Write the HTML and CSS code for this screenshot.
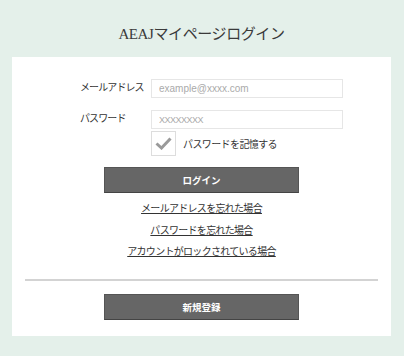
FILE: index.html
```html
<!DOCTYPE html>
<html lang="ja">
<head>
<meta charset="UTF-8" />
<title>AEAJマイページログイン</title>
<link rel="stylesheet" href="styles.css">
</head>
<body>
<main class="page">
  <h1 class="title">AEAJマイページログイン</h1>
  <section class="card">
    <form class="login">
      <div class="row">
        <label class="lbl" for="mail">メールアドレス</label>
        <input class="field" type="text" id="mail" placeholder="example@xxxx.com" />
      </div>
      <div class="row">
        <label class="lbl" for="pw">パスワード</label>
        <input class="field pw" type="password" id="pw" placeholder="XXXXXXXX" />
      </div>
      <div class="row remember">
        <span class="check"><svg width="17" height="13" viewBox="0 0 17 13"><path d="M1.5 6.5 L6.5 11 L15.5 1.5" fill="none" stroke="#9a9a9a" stroke-width="3"/></svg></span>
        <span class="remember-txt">パスワードを記憶する</span>
      </div>
      <button type="button" class="btn">ログイン</button>
    </form>
    <nav class="links">
      <a href="#">メールアドレスを忘れた場合</a>
      <a href="#">パスワードを忘れた場合</a>
      <a href="#">アカウントがロックされている場合</a>
    </nav>
    <hr class="sep" />
    <div class="reg"><button type="button" class="btn">新規登録</button></div>
  </section>
</main>
</body>
</html>
```

FILE: styles.css
```css
*,*:before,*:after{box-sizing:border-box;}
body{margin:0;background:#e4f0ea;font-family:"Noto Sans CJK JP","Noto Sans",sans-serif;color:#333;}
.page{width:404px;height:356px;padding:0 13px 0 12px;}
.title{margin:0;height:57px;padding-top:24px;text-align:center;font-family:"Liberation Serif","Noto Sans CJK JP",serif;font-weight:400;font-size:15px;line-height:20px;letter-spacing:-.4px;color:#3a3a3a;}
.card{background:#fff;padding:22px 0 15px;height:279px;}
.login{display:flex;flex-direction:column;}
.row{display:flex;align-items:center;padding-left:68px;margin-bottom:12px;}
.lbl{width:71px;font-size:10px;line-height:14px;margin-top:-4px;letter-spacing:-.9px;}
.field{width:192px;height:19px;border:1px solid #e6e6e6;padding:0 7px;font-family:"Liberation Sans",sans-serif;font-size:10px;color:#333;outline:none;}
.field::placeholder{color:#aaa;}
.field.pw::placeholder{font-size:9px;letter-spacing:-.5px;}
.remember{padding-left:139px;margin-top:-10px;margin-bottom:11px;gap:7px;}
.check{width:25px;height:25px;border:1px solid #ddd;display:flex;align-items:center;justify-content:center;}
.remember-txt{font-size:10px;line-height:14px;letter-spacing:-.6px;}
.btn{display:block;margin:0 auto;width:195px;height:26px;background:#666;border:1px solid #555;border-bottom-color:#444;color:#fff;font-family:"Noto Sans CJK JP",sans-serif;font-weight:700;font-size:9.5px;cursor:pointer;}
.links{display:flex;flex-direction:column;align-items:center;gap:7.5px;margin-top:8px;}
.links a{font-size:10px;line-height:14px;color:#333;text-decoration:underline;letter-spacing:-.7px;}
.sep{margin:21px 13px 0;border:0;border-top:2px solid #d3d3d3;}
.reg{margin-top:13px;}
```
